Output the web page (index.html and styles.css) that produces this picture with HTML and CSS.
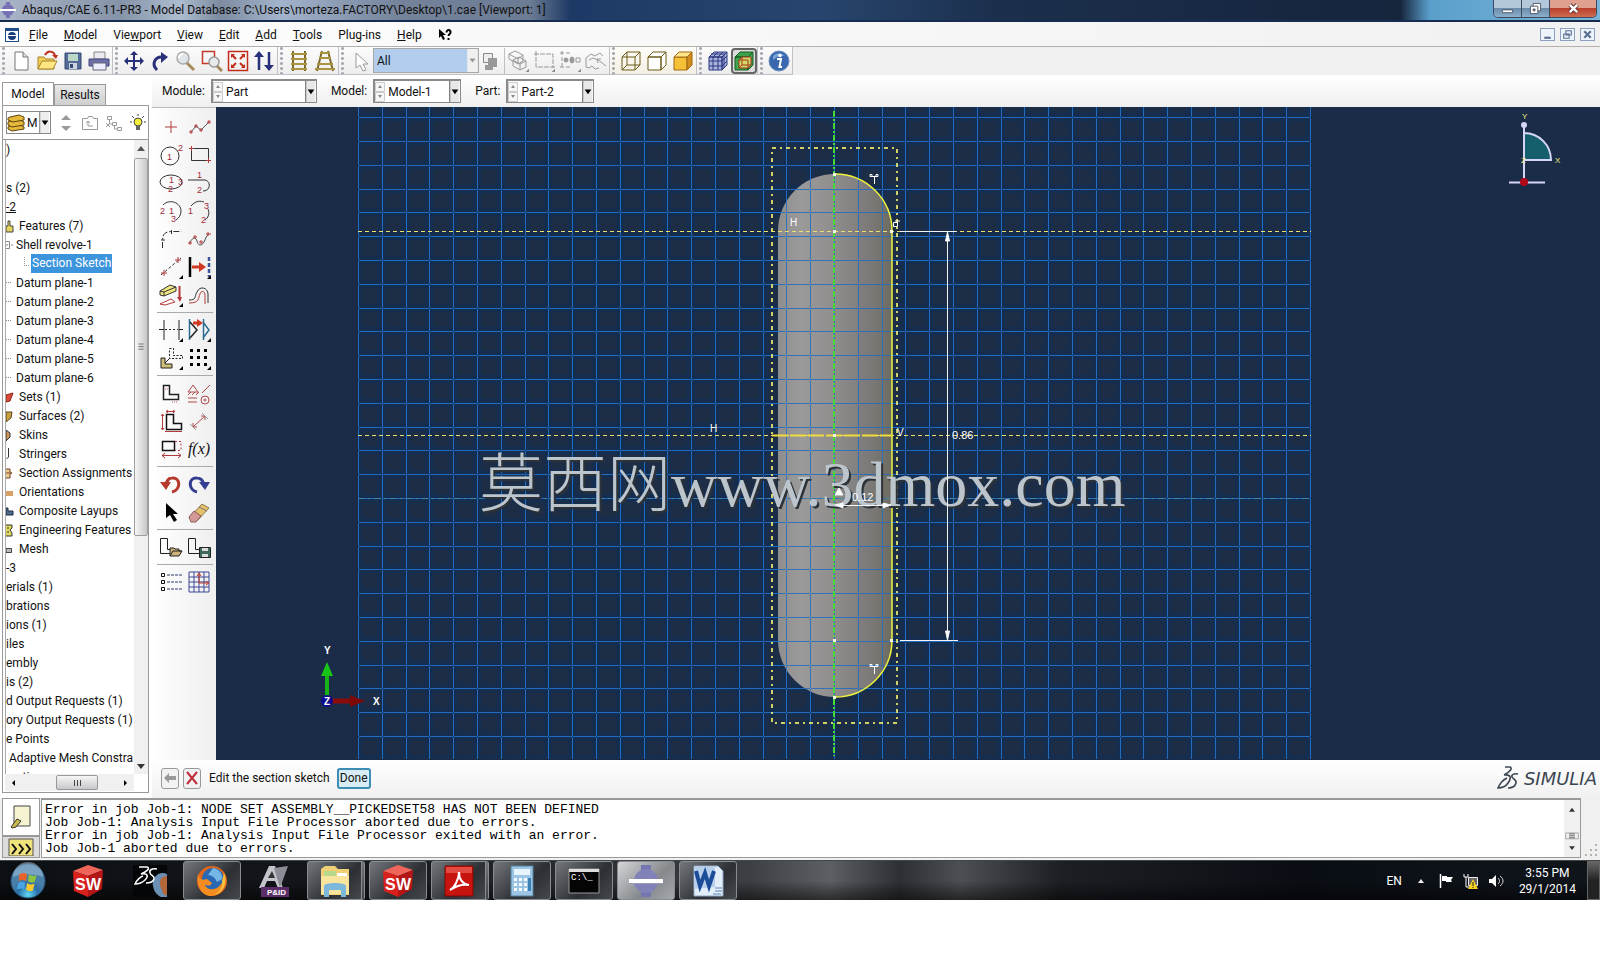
FILE: index.html
```html
<!DOCTYPE html>
<html lang="en">
<head>
    <meta charset="UTF-8">
    <meta name="viewport" content="width=device-width, initial-scale=1.0">
    <title>Abaqus/CAE 6.11-PR3</title>
    <link rel="stylesheet" href="styles.css">
</head>
<body>
    <header class="titlebar">
        <svg class="app-icon" viewBox="0 0 16 16"><circle cx="8" cy="8" r="6" fill="#7672b4"/><path d="M6 0h4v16H6z" fill="#7672b4"/><path d="M0 7h16v2H0z" fill="#fff"/></svg>
        <h1>Abaqus/CAE 6.11-PR3 - Model Database: C:\Users\morteza.FACTORY\Desktop\1.cae [Viewport: 1]</h1>
        <div class="window-buttons">
            <button aria-label="Minimize"><svg viewBox="0 0 14 14"><path d="M1.500 8.500h11v3h-11z" fill="#fff" stroke="#4c5566"/></svg></button>
            <button aria-label="Restore"><svg viewBox="0 0 14 14"><path d="M4.500 1.500h8v8h-8z" fill="#fff" stroke="#4c5566"/><path d="M1.500 4.500h8v8h-8z" fill="#fff" stroke="#4c5566"/><path d="M4.500 7.500h2v2h-2z" fill="#7890a8" stroke="#4c5566"/></svg></button>
            <button class="close" aria-label="Close"><svg viewBox="0 0 14 14"><path d="M3 3l8 8M11 3l-8 8" stroke="#5a2a2a" stroke-width="4.500"/><path d="M3 3l8 8M11 3l-8 8" stroke="#fff" stroke-width="2.600"/></svg></button>
        </div>
    </header>

    <nav class="menubar">
        <svg class="doc-icon" viewBox="0 0 14 14"><path d="M0 0h14v14H0z" fill="#1f4e86"/><path d="M1 3h12v10H1z" fill="#fff"/><ellipse cx="7" cy="8" rx="4" ry="4" fill="#1c3d78"/><path d="M2 7h10v1H2z" fill="#fff"/></svg>
        <a href="#"><u>F</u>ile</a>
        <a href="#"><u>M</u>odel</a>
        <a href="#">Vie<u>w</u>port</a>
        <a href="#"><u>V</u>iew</a>
        <a href="#"><u>E</u>dit</a>
        <a href="#"><u>A</u>dd</a>
        <a href="#"><u>T</u>ools</a>
        <a href="#">Plu<u>g</u>-ins</a>
        <a href="#"><u>H</u>elp</a>
        <button class="whats-this" aria-label="Context help"><svg viewBox="0 0 14 14"><path d="M1 1v9l2-2 2 4 2-1-2-4h3z"/><path d="M8.500 4.500c0-3.500 4.500-3 4 0c0 1.500-2 1.500-2 3.500M10.500 10v2" fill="none" stroke="#000" stroke-width="2"/></svg></button>
        <div class="mdi-buttons">
            <button aria-label="Minimize viewport"><svg viewBox="0 0 12 10"><path d="M3 8h6" stroke="#5b6f91" stroke-width="2"/></svg></button>
            <button aria-label="Restore viewport"><svg viewBox="0 0 12 10"><path d="M4.500 1.500h5v4h-5zM2.500 4.500h5v4h-5z" fill="#e8f0fb" stroke="#5b6f91"/></svg></button>
            <button aria-label="Close viewport"><svg viewBox="0 0 12 10"><path d="M3 2l6 6M9 2l-6 6" stroke="#5b6f91" stroke-width="2"/></svg></button>
        </div>
    </nav>

    <div class="toolbar">
        <div class="tool-group">
            <button aria-label="New"><svg viewBox="0 0 22 22"><path d="M5 2h8l5 5v13H5z" fill="#fff" stroke="#777"/><path d="M13 2v5h5" fill="#ddd" stroke="#777"/></svg></button>
            <button aria-label="Open"><svg viewBox="0 0 22 22"><path d="M2 19V7h6l2 2h8v10z" fill="#f3cf58" stroke="#a8842c"/><path d="M2 19l4-8h15l-4 8z" fill="#ffe680" stroke="#a8842c"/><path d="M9 5c3-5 8-4 10 0" fill="none" stroke="#c03020" stroke-width="2"/><path d="M16 5h6l-2 4z" fill="#c03020"/></svg></button>
            <button aria-label="Save"><svg viewBox="0 0 22 22"><path d="M3 3h16v16H3z" fill="#546b98" stroke="#354a70"/><path d="M6 4h10v7H6z" fill="#b9d9c6"/><path d="M7 13h8v6H7z" fill="#cdd3df"/><path d="M8 14h3v4H8z" fill="#354a70"/></svg></button>
            <button aria-label="Print"><svg viewBox="0 0 22 22"><path d="M6 2h11v7H6z" fill="#e9e9ef" stroke="#888"/><path d="M1 9h20v7H1z" fill="#6d6fa6" stroke="#45467a"/><path d="M5 13h13v7H5z" fill="#eef" stroke="#667"/></svg></button>
        </div>
        <div class="tool-group">
            <button aria-label="Pan"><svg viewBox="0 0 22 22"><path d="M11 3v16M3 11h16" stroke="#29307a" stroke-width="2"/><path d="M11 1l4 4H7zM11 21l4-4H7zM1 11l4-4v8zM21 11l-4-4v8z" fill="#29307a"/></svg></button>
            <button aria-label="Rotate"><svg viewBox="0 0 22 22"><path d="M8 20C2 14 6 6 14 7" fill="none" stroke="#29307a" stroke-width="3"/><path d="M12 2l7 5-7 6z" fill="#29307a"/></svg></button>
            <button aria-label="Magnify"><svg viewBox="0 0 22 22"><path d="M11 12l8 8" stroke="#a58a5c" stroke-width="3"/><circle cx="8" cy="8" r="6" fill="#dfe5e8" stroke="#aaa" stroke-width="1.500"/><path d="M4 8a4 4 0 014-4" fill="none" stroke="#fff" stroke-width="2"/></svg></button>
            <button aria-label="Box zoom"><svg viewBox="0 0 22 22"><path d="M1.500 1.500h12v12h-12z" fill="none" stroke="#c0392b" stroke-width="1.500"/><path d="M15 15l6 6" stroke="#a58a5c" stroke-width="3"/><circle cx="13" cy="12" r="5" fill="#e6eaec" stroke="#999" stroke-width="1.500"/></svg></button>
            <button aria-label="Auto-fit"><svg viewBox="0 0 22 22"><path d="M1.500 1.500h19v19h-19z" fill="none" stroke="#c22d1c" stroke-width="1.500"/><path d="M9 9L5 5M13 9l4-4M9 13l-4 4M13 13l4 4" stroke="#c22d1c" stroke-width="2"/><path d="M4 4h4L4 8zM18 4v4l-4-4zM4 18v-4l4 4zM18 18h-4l4-4z" fill="#c22d1c"/></svg></button>
            <button aria-label="Cycle views"><svg viewBox="0 0 22 22"><path d="M6 20V5M16 2v15" stroke="#29307a" stroke-width="2.500"/><path d="M6 1l5 6H1zM16 21l5-6H11z" fill="#29307a"/></svg></button>
        </div>
        <div class="tool-group">
            <button aria-label="Parallel projection"><svg viewBox="0 0 22 22"><path d="M5 1v20M17 1v20" stroke="#7c6a2c" stroke-width="2"/><path d="M3 4h16M3 9h16M3 14h16M3 19h16" stroke="#ab9440" stroke-width="2"/></svg></button>
            <button aria-label="Perspective"><svg viewBox="0 0 22 22"><path d="M8 1L3 21M14 1l5 20" stroke="#7c6a2c" stroke-width="2"/><path d="M6 3h10M5 8h12M3 14h16M1 19h20" stroke="#ab9440" stroke-width="2"/></svg></button>
        </div>
        <div class="tool-group">
            <button aria-label="Select"><svg viewBox="0 0 22 22"><path d="M7 3v15l4-3 3 6 3-1-3-6h5z" fill="#fff" stroke="#999"/></svg></button>
            <div class="combo combo-filter">
                <select aria-label="Selection filter"><option>All</option></select>
                <svg class="arrow" viewBox="0 0 10 22"><path d="M0 0h10v22H0z" fill="#f0f0f0"/><path d="M2 9h6l-3 4z" fill="#999"/></svg>
            </div>
            <button class="divided" aria-label="Replace selection"><svg viewBox="0 0 22 22"><path d="M2.500 3.500h9v9h-9z" fill="#eee" stroke="#888"/><path d="M7 8h9v9H7zM4 15h8v5H4z" fill="#999"/></svg></button>
            <button aria-label="Select from exterior"><svg viewBox="0 0 22 22" fill="none" stroke="#999"><path d="M2 4l6-3 8 4v6l-5 3-9-5zM2 4l9 5v5M11 9l5-4M6 10l6-3 7 4v6l-6 3-7-4zM6 10l7 4v6M13 14l6-3"/><path d="M22 19v3h-3z" fill="#777"/></svg></button>
            <button aria-label="Drag shape"><svg viewBox="0 0 22 22" fill="none" stroke="#999"><path d="M1 4h19v14M3 1v16h19" stroke-dasharray="5 1"/><path d="M22 19v3h-3z" fill="#777"/></svg></button>
            <button aria-label="Inside drag shape"><svg viewBox="0 0 22 22" fill="none" stroke="#999"><path d="M1 3h12M3 1v17M1 17h12" stroke-dasharray="4 2"/><circle cx="7" cy="10" r="2" fill="#999"/><ellipse cx="13" cy="10" rx="2" ry="3" fill="#999"/><path d="M17 8h4v4h-4z"/><path d="M22 19v3h-3z" fill="#777"/></svg></button>
            <button aria-label="Angle"><svg viewBox="0 0 22 22" fill="none" stroke="#999"><path d="M1 8l5-4 4 2 5-3 3 3M1 8v9l3 1 3-2 3 3 4-1M4 10l4-2 5 2M12 9l9 7M12 9l1 4M12 9h4"/></svg></button>
        </div>
        <div class="tool-group warm">
            <button aria-label="Wireframe"><svg viewBox="0 0 22 22" fill="none" stroke="#6b5a18"><path d="M2 7h13v13H2zM7 2h13v13H7zM2 7l5-5M15 7l5-5M15 20l5-5M2 20l5-5"/></svg></button>
            <button aria-label="Hidden line"><svg viewBox="0 0 22 22" fill="#fff" stroke="#6b5a18"><path d="M2 7h13v13H2zM2 7l5-5h13l-5 5zM15 20l5-5V2l-5 5z"/></svg></button>
            <button aria-label="Shaded"><svg viewBox="0 0 22 22" stroke="#a06a10"><path d="M2 7h13v13H2z" fill="#f6c136"/><path d="M2 7l5-5h13l-5 5z" fill="#ffe68a"/><path d="M15 20l5-5V2l-5 5z" fill="#d08c1c"/></svg></button>
        </div>
        <div class="tool-group">
            <button aria-label="Show mesh"><svg viewBox="0 0 22 22" stroke="#2c3780"><path d="M2 7h13v13H2zM2 7l5-5h13l-5 5zM15 20l5-5V2l-5 5z" fill="#a9b3dc"/><path d="M6 7v13M11 7v13M2 11h13l5-5M2 16h13l5-5M6 7l5-5M11 7l5-5M17 5v13M4 4h14" fill="none"/></svg></button>
            <button class="active" aria-label="Show native mesh"><svg viewBox="0 0 22 22" stroke="#175c22"><path d="M2 7h13v13H2zM2 7l5-5h13l-5 5zM15 20l5-5V2l-5 5z" fill="#3fa34d"/><path d="M6 10h9v8H6zM6 10l3-3h9v8l-3 3" fill="#d4d866" stroke="#a03820"/><path d="M9 7v8h9M6 18l3-3" fill="none" stroke="#a03820"/></svg></button>
        </div>
        <div class="tool-group">
            <button aria-label="Query information"><svg viewBox="0 0 22 22"><circle cx="11" cy="11" r="10" fill="#3a68ae" stroke="#6c8cc0"/><path d="M5 6a8 8 0 0112 0c-4-1-8 0-12 4z" fill="#7da2d8"/><circle cx="12" cy="5.500" r="1.800" fill="#fff"/><path d="M9 9h4l-1.500 8H14" fill="none" stroke="#fff" stroke-width="2"/></svg></button>
        </div>
    </div>

    <main class="workspace">
        <aside class="model-panel">
            <div class="tabs">
                <button class="tab selected">Model</button>
                <button class="tab">Results</button>
            </div>
            <div class="tree-pane">
                <div class="tree-tools">
                    <div class="combo combo-db">
                        <svg class="db" viewBox="0 0 18 18" fill="#e6b93c" stroke="#5c4308"><path d="M3 12l10-1 4 2v2l-12 2-4-2v-2z"/><path d="M3 7l10-1 4 2v3l-12 2-4-2V8z"/><path d="M3 3l9-2 5 2v3L6 8 1 6V4z"/></svg>
                        <select aria-label="Model database"><option>M</option></select>
                        <svg class="arrow" viewBox="0 0 10 22"><path d="M0 0h10v22H0z" fill="#eee"/><path d="M0 0v22" stroke="#777"/><path d="M2 9h7l-3.500 5z"/></svg>
                    </div>
                    <button aria-label="Step up or down"><svg viewBox="0 0 18 18" fill="#999"><path d="M9 1l5 5H4zM9 17l5-5H4z"/></svg></button>
                    <button aria-label="Up one level"><svg viewBox="0 0 18 18" fill="none" stroke="#999"><path d="M1.500 4.500h5l1-2h4l1 2h4v11h-15zM12 12H7V7M5 9l2-2 2 2"/></svg></button>
                    <button aria-label="Expand"><svg viewBox="0 0 18 18" fill="none" stroke="#999"><path d="M2.500 2.500h4v3h-4zM7.500 8.500h4v3h-4zM12.500 13.500h4v3h-4zM4.500 6v4h3M9.500 12v3h3M1 9l4 4M1 13l4-4"/></svg></button>
                    <button aria-label="Tips"><svg viewBox="0 0 18 18"><circle cx="9" cy="8" r="4" fill="#f4ee3c" stroke="#444"/><path d="M7 12h4v4H7z" fill="#666"/><path d="M9 0v2M1 8h2M15 8h2M3 2l2 2M15 2l-2 2" stroke="#444"/></svg></button>
                </div>
                <div class="tree-view">
                    <ul class="tree">
                        <li>)</li>
                        <li></li>
                        <li>s (2)</li>
                        <li class="current">-2</li>
                        <li class="feature"><svg viewBox="0 0 8 14"><path d="M0 7h2V2h2v5h3v6H0z" fill="#e2d45c" stroke="#444"/></svg>Features (7)</li>
                        <li class="branch"><svg viewBox="0 0 8 14"><path d="M0 3.500h3.500v7H0M0 7h2M5 7h2" fill="none" stroke="#888"/></svg>Shell revolve-1</li>
                        <li class="leaf"><svg viewBox="0 0 8 14"><path d="M1.500 0v8M1 8.500h6" stroke="#999" stroke-dasharray="1 1"/></svg><mark>Section Sketch</mark></li>
                        <li class="branch datum">Datum plane-1</li>
                        <li class="branch datum">Datum plane-2</li>
                        <li class="branch datum">Datum plane-3</li>
                        <li class="branch datum">Datum plane-4</li>
                        <li class="branch datum">Datum plane-5</li>
                        <li class="branch datum">Datum plane-6</li>
                        <li class="feature"><svg viewBox="0 0 8 14"><path d="M0 5l7-2-3 8-4 1z" fill="#d84a3a" stroke="#8c2418"/></svg>Sets (1)</li>
                        <li class="feature"><svg viewBox="0 0 8 14"><path d="M0 3h6l-1 6-5 4z" fill="#c9a044" stroke="#5d4716"/></svg>Surfaces (2)</li>
                        <li class="feature"><svg viewBox="0 0 8 14"><path d="M0 2l4 3v4l-4 4z" fill="#d4934e" stroke="#26304e"/></svg>Skins</li>
                        <li class="feature"><svg viewBox="0 0 8 14"><path d="M2.500 1v9l-2 2" fill="none" stroke="#333"/></svg>Stringers</li>
                        <li class="feature"><svg viewBox="0 0 8 14"><path d="M0 3h4v3l2 1-2 1v4H0M0 7h4" fill="#e4cf90" stroke="#7c3d24"/></svg>Section Assignments</li>
                        <li class="feature"><svg viewBox="0 0 8 14"><path d="M0 6h7v5H0z" fill="#d8a266"/></svg>Orientations</li>
                        <li class="feature"><svg viewBox="0 0 8 14"><path d="M0 4h2v3h5v4H0z" fill="#4c6c8c" stroke="#1c2c44"/></svg>Composite Layups</li>
                        <li class="feature"><svg viewBox="0 0 8 14"><path d="M0 2h6v3L4 7l2 3v3H0M1 5h2M1 9h2" fill="#e2da5c" stroke="#333"/></svg>Engineering Features</li>
                        <li class="feature"><svg viewBox="0 0 8 14"><path d="M0 6.500h5.500v4H0z" fill="#bbb" stroke="#444"/></svg>Mesh</li>
                        <li>-3</li>
                        <li>erials (1)</li>
                        <li>brations</li>
                        <li>ions (1)</li>
                        <li>iles</li>
                        <li>embly</li>
                        <li>is (2)</li>
                        <li>d Output Requests (1)</li>
                        <li>ory Output Requests (1)</li>
                        <li>e Points</li>
                        <li>&nbsp;Adaptive Mesh Constra</li>
                        <li>rections</li>
                    </ul>
                    <div class="vscroll">
                        <svg viewBox="0 0 14 18"><path d="M3 11l4-5 4 5z" fill="#555"/></svg>
                        <div class="vthumb"><svg viewBox="0 0 14 14"><path d="M4 3.500h6M4 6.500h6M4 9.500h6" stroke="#666"/></svg></div>
                        <svg class="down" viewBox="0 0 14 18"><path d="M3 8l4 5 4-5z" fill="#333"/></svg>
                    </div>
                </div>
                <div class="hscroll">
                    <svg viewBox="0 0 16 14"><path d="M10 4L7 7l3 3z"/></svg>
                    <div class="hthumb"><svg viewBox="0 0 14 14"><path d="M4.500 4v6M7.500 4v6M10.500 4v6" stroke="#444"/></svg></div>
                    <svg viewBox="0 0 16 14"><path d="M6 4l3 3-3 3z"/></svg>
                </div>
            </div>
        </aside>

        <div class="stage">
            <div class="context-bar">
                <label for="module">Module:</label>
                <div class="combo combo-module">
                    <svg class="spin" viewBox="0 0 10 20"><path d="M.5.5h9v9h-9zM.5 10.500h9v9h-9z" fill="#f6f6f6" stroke="#ccc"/><path d="M5 3l2 3H3zM5 16l2-3H3z" fill="#888"/></svg>
                    <select id="module"><option>Part</option></select>
                    <svg class="arrow" viewBox="0 0 10 22"><path d="M0 0h10v22H0z" fill="#e8e8e8"/><path d="M0 0v22" stroke="#555"/><path d="M2 9h7l-3.500 5z"/></svg>
                </div>
                <label for="model">Model:</label>
                <div class="combo">
                    <svg class="spin" viewBox="0 0 10 20"><path d="M.5.5h9v9h-9zM.5 10.500h9v9h-9z" fill="#f6f6f6" stroke="#ccc"/><path d="M5 3l2 3H3zM5 16l2-3H3z" fill="#888"/></svg>
                    <select id="model"><option>Model-1</option></select>
                    <svg class="arrow" viewBox="0 0 10 22"><path d="M0 0h10v22H0z" fill="#e8e8e8"/><path d="M0 0v22" stroke="#555"/><path d="M2 9h7l-3.500 5z"/></svg>
                </div>
                <label for="part">Part:</label>
                <div class="combo">
                    <svg class="spin" viewBox="0 0 10 20"><path d="M.5.5h9v9h-9zM.5 10.500h9v9h-9z" fill="#f6f6f6" stroke="#ccc"/><path d="M5 3l2 3H3zM5 16l2-3H3z" fill="#888"/></svg>
                    <select id="part"><option>Part-2</option></select>
                    <svg class="arrow" viewBox="0 0 10 22"><path d="M0 0h10v22H0z" fill="#e8e8e8"/><path d="M0 0v22" stroke="#555"/><path d="M2 9h7l-3.500 5z"/></svg>
                </div>
            </div>

            <div class="drawing-area">
                <div class="toolbox">
                    <div class="tool-block">
                        <button aria-label="Isolated point"><svg viewBox="0 0 24 24"><path d="M12 6v12M6 12h12" stroke="#b33a3a"/></svg></button>
                        <button aria-label="Connected lines"><svg viewBox="0 0 24 24" fill="none"><path d="M4 17l5-6 5 4 8-8" stroke="#555"/><path d="M2 17h4M4 15v4M7 11h4M9 9v4M12 15h4M14 13v4M20 7h4M22 5v4" stroke="#b33a3a"/></svg></button>
                        <button aria-label="Circle"><svg viewBox="0 0 24 24" fill="none"><circle cx="11" cy="13" r="9" stroke="#333"/><text x="8" y="17" class="num">1</text><text x="19" y="8" class="num">2</text></svg></button>
                        <button aria-label="Rectangle"><svg viewBox="0 0 24 24" fill="none"><path d="M4.500 5.500h17v12h-17z" stroke="#333"/><path d="M2 5.500h5M4.500 3v5M19 17.500h5M21.500 15v5" stroke="#b33a3a"/></svg></button>
                        <button aria-label="Ellipse"><svg viewBox="0 0 24 24" fill="none"><ellipse cx="12" cy="11" rx="11" ry="7" stroke="#333"/><text x="10" y="12" class="num">1</text><text x="9" y="21" class="num">2</text><text x="19" y="14" class="num">3</text></svg></button>
                        <button aria-label="Tangent arc"><svg viewBox="0 0 24 24" fill="none"><path d="M1 9h17c6 1 6 11-2 11" stroke="#333"/><text x="10" y="7" class="num">1</text><text x="10" y="22" class="num">2</text></svg></button>
                        <button aria-label="Center arc"><svg viewBox="0 0 24 24" fill="none"><path d="M4 6c7-7 18-2 18 6c0 4-2 7-5 9" stroke="#333"/><text x="1" y="15" class="num">2</text><text x="10" y="15" class="num">1</text><text x="12" y="23" class="num">3</text></svg></button>
                        <button aria-label="Three point arc"><svg viewBox="0 0 24 24" fill="none"><path d="M4 7c5-6 10-5 13-4M21 10c2 5 0 9-3 11" stroke="#333"/><text x="1" y="15" class="num">1</text><text x="17" y="10" class="num">3</text><text x="14" y="24" class="num">2</text></svg></button>
                        <button aria-label="Fillet"><svg viewBox="0 0 24 24" fill="none" stroke="#333"><path d="M3.500 21v-7c0-7 2-9 9-9.500h10" stroke-dasharray="6 2 2 2"/><path d="M2 13h4M12.500 3v4"/></svg></button>
                        <button aria-label="Spline"><svg viewBox="0 0 24 24" fill="none"><path d="M3 16c2-6 6-6 7-2s4 6 7 1c2-4 2-6 5-8" stroke="#444"/><path d="M1 16h4M3 14v4M6 10h4M8 8v4M12 15h4M14 13v4M19 7h5M21 5v4" stroke="#b33a3a"/></svg></button>
                        <button aria-label="Construction line"><svg viewBox="0 0 24 24" fill="none"><path d="M2 20L22 3" stroke="#333" stroke-dasharray="3 2"/><path d="M2 18h6M5 15v6M16 5h6M19 2v6" stroke="#b33a3a"/><path d="M24 20v4h-4z" fill="#000"/></svg></button>
                        <button aria-label="Project edges"><svg viewBox="0 0 24 24"><path d="M3 2v20" stroke="#000" stroke-width="2.500"/><path d="M5 12h9" stroke="#d03a24" stroke-width="3"/><path d="M12 7l7 5-7 5z" fill="#d03a24"/><path d="M22 2v20" stroke="#3a54a0" stroke-width="2.500" stroke-dasharray="4 2"/><path d="M24 20v4h-4z" fill="#000"/></svg></button>
                        <button aria-label="Section"><svg viewBox="0 0 24 24" stroke="#333"><path d="M1 8l10-6 6 2v4L5 13l-4-1z" fill="#f1e582"/><path d="M1 8l4 1 12-5M5 9v4" fill="none"/><path d="M1 21l11-5 4 3-10 3z" fill="#fff" stroke="#b33a3a"/><path d="M20.500 3v13" stroke="#b33a3a" stroke-width="2"/><path d="M18 14h5l-2 5z" fill="#b33a3a" stroke="none"/><path d="M24 20v4h-4z" fill="#000" stroke="none"/></svg></button>
                        <button aria-label="Offset curves"><svg viewBox="0 0 24 24" fill="none"><path d="M2 17c8 0 5-3 8-8 3-7 11-4 11 2v9" stroke="#333"/><path d="M2 20c11 0 9-5 11-9 1-4 5-3 5 1v9" stroke="#b33a3a"/></svg></button>
                    </div>
                    <hr>
                    <div class="tool-block">
                        <button aria-label="Auto-trim"><svg viewBox="0 0 24 24" fill="none" stroke="#222"><path d="M5 2v20M20 2v20M0 11.500h5M20 11.500h4"/><path d="M6 11.500h13" stroke-dasharray="2 2"/><path d="M24 20v4h-4z" fill="#000" stroke="none"/></svg></button>
                        <button aria-label="Mirror"><svg viewBox="0 0 24 24" fill="none" stroke="#2b6c94" stroke-width="1.500"><path d="M2.500 1v21M16.500 1v21M16 4l6 8-6 8"/><path d="M3 4l7 8-7 8" stroke="#222"/><path d="M6 5h5" stroke="#d03a24" stroke-width="3"/><path d="M10 1l6 4-6 4z" fill="#d03a24" stroke="none"/><path d="M24 20v4h-4z" fill="#000" stroke="none"/></svg></button>
                        <button aria-label="Copy"><svg viewBox="0 0 24 24" fill="none" stroke="#222"><path d="M2 12h4v6h7v4H2z" fill="#cfc07a"/><path d="M10.500 2.500h4v7h9v3h-13z" stroke-dasharray="2 1.500"/><path d="M6 17l5-5"/><path d="M24 20v4h-4z" fill="#000" stroke="none"/></svg></button>
                        <button aria-label="Linear pattern"><svg viewBox="0 0 24 24"><path d="M3 3h3v3H3zM10 3h3v3h-3zM17 3h3v3h-3zM3 10h3v3H3zM10 10h3v3h-3zM17 10h3v3h-3zM3 17h3v3H3zM10 17h3v3h-3zM17 17h3v3h-3z"/><path d="M24 20v4h-4z"/></svg></button>
                    </div>
                    <hr>
                    <div class="tool-block">
                        <button aria-label="Auto-constrain"><svg viewBox="0 0 24 24" fill="none" stroke="#222"><path d="M4.500 4.500h6v9h9v5h-15z" stroke-width="1.500"/><path d="M6 8h3M13 21h5" stroke="#c06060" stroke-dasharray="1 1"/></svg></button>
                        <button aria-label="Add constraint"><svg viewBox="0 0 24 24" fill="none" stroke="#b04a4a"><path d="M1 11l5-7 5 7zM1 14l3-3M5 14l3-3M9 14l3-3M15 12l8-8M1 17h9M1 21h9"/><circle cx="18" cy="19" r="4"/><circle cx="18" cy="19" r="1"/></svg></button>
                        <button aria-label="Auto-dimension"><svg viewBox="0 0 24 24" fill="none"><path d="M7.500 5.500h7v9h8v6h-15z" stroke="#111" stroke-width="1.500"/><path d="M3.500 6v14M2 7l1.500-2L5 7M2 19l1.500 2L5 19M8 2.500h7M6 22.500h17M9 1l-2 1.500L9 4M14 1l2 1.500L14 4" stroke="#b33a3a"/></svg></button>
                        <button aria-label="Add dimension"><svg viewBox="0 0 24 24" fill="none" stroke="#b04a4a"><path d="M6 18L18 7M6 14v4h4M14 7h4v4" /><path d="M3 15l6 6M15 4l6 6" stroke="#999"/></svg></button>
                        <button aria-label="Edit dimension"><svg viewBox="0 0 24 24" fill="none"><path d="M3.500 4.500h12v9h-12z" stroke="#111" stroke-width="1.500"/><path d="M16 4.500h6v9h-6" stroke="#b33a3a" stroke-dasharray="2 2"/><path d="M3 18.500h19M6 16l-3 2.500L6 21M19 16l3 2.500-3 2.500" stroke="#b33a3a"/></svg></button>
                        <button class="fx">f(x)</button>
                    </div>
                    <hr>
                    <div class="tool-block">
                        <button aria-label="Undo"><svg viewBox="0 0 24 24"><path d="M13 20c9-2 9-15 0-14-4 0-5 3-6 6" fill="none" stroke="#b5392c" stroke-width="3"/><path d="M1 10h11l-5 8z" fill="#b5392c"/></svg></button>
                        <button aria-label="Redo"><svg viewBox="0 0 24 24"><path d="M10 20C1 18 1 5 10 6c4 0 6 3 7 6" fill="none" stroke="#343e90" stroke-width="3"/><path d="M12 10h11l-5 8z" fill="#343e90"/></svg></button>
                        <button aria-label="Pick"><svg viewBox="0 0 24 24"><path d="M7 3v15l4-3 4 7 3-2-4-6h5z"/></svg></button>
                        <button aria-label="Delete"><svg viewBox="0 0 24 24"><path d="M3 17L15 4l7 4L10 21z" fill="#e4c06c" stroke="#8c7a4c"/><path d="M2 17l5-6 7 5-5 6H4z" fill="#d49a9a" stroke="#8c5a5a"/><path d="M12 7l8 4" stroke="#777"/></svg></button>
                    </div>
                    <hr>
                    <div class="tool-block">
                        <button aria-label="Add sketch"><svg viewBox="0 0 24 24" fill="none" stroke="#222"><path d="M1.500 3.500h7v11h4v4h-11z"/><path d="M11 21v-8h4l1 1h4v2h3l-3 5z" fill="#cbb27a"/><path d="M11 21l3-5h9" /></svg></button>
                        <button aria-label="Save sketch"><svg viewBox="0 0 24 24" fill="none" stroke="#222"><path d="M1.500 3.500h7v11h4v4h-11z"/><path d="M12.500 12.500h11v10h-11z" fill="#3f6a5c"/><path d="M15 13h6v3h-6zM15 19h6v3h-6z" fill="#ddd" stroke="none"/></svg></button>
                    </div>
                    <hr>
                    <div class="tool-block">
                        <button aria-label="Sketcher options"><svg viewBox="0 0 24 24" fill="none"><path d="M2.500 3.500h3v3h-3zM2.500 10.500h3v3h-3zM2.500 17.500h3v3h-3z" stroke="#111"/><path d="M8 5h15M8 12h15M8 19h15" stroke="#2e3a6c" stroke-dasharray="3 1"/></svg></button>
                        <button aria-label="Reset view"><svg viewBox="0 0 24 24" fill="none"><path d="M2 2h20v20H2zM7 2v20M12 2v20M17 2v20M2 7h20M2 12h20M2 17h20" stroke="#3c4696"/><path d="M12 13V4M12 13h9M10 6l2-3 2 3M19 11l3 2-3 2" stroke="#c0392b"/></svg></button>
                    </div>
                </div>

                <svg class="viewport" viewBox="0 0 1384 653" role="img" aria-label="Section sketch">
                    <defs>
                        <!-- five grid cells per tile -->
                        <pattern id="grid" x="142" y="-85" width="119" height="119" patternUnits="userSpaceOnUse">
                            <rect width="119" height="119" fill="#1c2d45"/>
                            <path class="grid-glow" d="M0 0v119M24 0v119M48 0v119M71 0v119M95 0v119M119 0v119M0 0h119M0 24h119M0 48h119M0 71h119M0 95h119M0 119h119"/>
                            <path class="grid-line" d="M0 0h1v119H0zM24 0h1v119h-1zM48 0h1v119h-1zM71 0h1v119h-1zM95 0h1v119h-1zM0 0v1h119V0zM0 24v1h119v-1zM0 48v1h119v-1zM0 71v1h119v-1zM0 95v1h119v-1z"/>
                        </pattern>
                        <pattern id="gridTop" x="142" y="-85" width="119" height="119" patternUnits="userSpaceOnUse">
                            <path class="grid-line" d="M0 0h1v119H0zM24 0h1v119h-1zM48 0h1v119h-1zM71 0h1v119h-1zM95 0h1v119h-1zM0 0v1h119V0zM0 24v1h119v-1zM0 48v1h119v-1zM0 71v1h119v-1zM0 95v1h119v-1z"/>
                        </pattern>
                        <linearGradient id="shell">
                            <stop offset="0" stop-color="#8e8e8f"/>
                            <stop offset=".2" stop-color="#9b9a9a"/>
                            <stop offset=".5" stop-color="#8f8d8c"/>
                            <stop offset=".8" stop-color="#7c7a79"/>
                            <stop offset="1" stop-color="#6c6b60"/>
                        </linearGradient>
                    </defs>
                    <rect width="1384" height="653" fill="#1b2c48"/>
                    <rect x="142" width="953" height="652" fill="url(#grid)"/>

                    <path d="M562 124a57 57 0 01114 0v409a57 57 0 01-114 0z" fill="url(#shell)"/>
                    <path d="M562 124a57 57 0 01114 0v409a57 57 0 01-114 0z" fill="url(#gridTop)" opacity=".85"/>
                    <path d="M618 67a57 57 0 0158 57v409a57 57 0 01-58 57" fill="none" stroke="#eef23c" stroke-width="1.500"/>

                    <path class="ref-line" d="M142 124.500h953M142 328.500h953"/>
                    <path class="origin-line" d="M142 391.500h953"/>
                    <path class="ref-box" d="M556 41h125v575h-125z"/>
                    <path d="M556 328.500h120" stroke="#f0dc3c" stroke-width="2" stroke-dasharray="16 2"/>
                    <path class="axis" d="M618 4v645"/>

                    <g fill="#f4f6e0"><path d="M617 66h3v3h-3zM617 123h3v3h-3zM674 123h3v3h-3zM617 532h3v3h-3zM674 532h3v3h-3zM617 589h3v3h-3zM617 327h3v3h-3z"/></g>

                    <g class="marks">
                        <text x="574" y="119">H</text>
                        <text x="494" y="325">H</text>
                        <text x="681" y="329">V</text>
                        <path d="M654 69.500h8M658.500 69v8M654 67.500h2v2h-2zM660 67.500h2v2h-2zM654 559.500h8M658.500 559v8M654 557.500h2v2h-2zM660 557.500h2v2h-2zM677.500 115.500h4v4h-4zM679 114h5"/>
                    </g>

                    <!-- axis triad -->
                    <path d="M111 592v-24" stroke="#16b416" stroke-width="4"/>
                    <path d="M111 555l6 14h-12z" fill="#18c418"/>
                    <path d="M116 594h20" stroke="#8c0c0c" stroke-width="5"/>
                    <path d="M134 588l15 6-15 6z" fill="#7c0808"/>
                    <circle cx="111" cy="594" r="6" fill="#0a0a90"/>
                    <g class="triad">
                        <text x="108" y="547">Y</text>
                        <text x="108" y="598">Z</text>
                        <text x="157" y="598">X</text>
                    </g>

                    <!-- view compass -->
                    <path d="M1308 53V26a27 27 0 0127 27z" fill="#155f6c" stroke="#d5d5f5" stroke-width="2"/>
                    <path d="M1308 18v57M1293 75.500h36" stroke="#d5d5f5" stroke-width="2"/>
                    <circle cx="1308" cy="18" r="3" fill="#d5d5f5"/>
                    <circle cx="1308" cy="75" r="4" fill="#b00818"/>
                    <g class="compass">
                        <text x="1306" y="12">Y</text>
                        <text x="1305" y="56">Z</text>
                        <text x="1339" y="56">X</text>
                    </g>

                    <text class="watermark" x="263" y="399">莫西网www.3dmox.com</text>

                    <g class="dims">
                        <path d="M684 124.500h56M684 533.500h58M731.500 125v408M619 398.500h56"/>
                        <path class="head" d="M731.500 125l2 9h-4zM731.500 533l2-9h-4zM619 398l8-2v5zM675 398l-8-2v5zM619 388l4-7 4 7z"/>
                        <text x="736" y="332">0.86</text>
                        <text x="636" y="394">0.12</text>
                    </g>
                </svg>
            </div>

            <div class="prompt-area">
                <button class="square" aria-label="Back" disabled><svg viewBox="0 0 16 18"><path d="M2 9l5-5v3h7v4H7v3z" fill="#999"/></svg></button>
                <button class="square" aria-label="Cancel"><svg viewBox="0 0 16 18"><path d="M3 3l10 12M13 3L3 15" stroke="#c02a3c" stroke-width="2"/></svg></button>
                <span>Edit the section sketch</span>
                <button class="done">Done</button>
                <div class="brand">
                    <svg viewBox="0 0 22 24" fill="none" stroke="#3c4650" stroke-width="1.600"><path d="M8 1h5c3 1 0 5-6 8M7 9c8-1 7 4 4 8-2 3-6 5-10 5 2-5 5-8 9-10"/><path d="M21 8c-4-1-7 1-6 3s5 3 4 6c-1 4-4 5-8 5"/></svg>
                    <span>SIMULIA</span>
                </div>
            </div>
        </div>
    </main>

    <section class="message-area">
        <div class="message-tabs">
            <button class="selected" aria-label="Messages"><svg viewBox="0 0 22 26"><path d="M4 2h16v20H4z" fill="#f5f3d0" stroke="#444"/><path d="M1 23l6-8 4 2-5 6-4 1z" fill="#c8b84a" stroke="#333"/></svg></button>
            <button aria-label="Command line"><svg viewBox="0 0 26 18"><path d="M1 1h24v17H1z" fill="#f0e27c" stroke="#555"/><path d="M4 6l4 5-4 5M11 6l4 5-4 5M18 6l4 5-4 5" fill="none" stroke="#111" stroke-width="2"/></svg></button>
        </div>
        <div class="log">
            <pre>Error in job Job-1: NODE SET ASSEMBLY__PICKEDSET58 HAS NOT BEEN DEFINED
Job Job-1: Analysis Input File Processor aborted due to errors.
Error in job Job-1: Analysis Input File Processor exited with an error.
Job Job-1 aborted due to errors.</pre>
            <svg class="log-scroll" viewBox="0 0 16 58"><path d="M0 0h16v58H0z" fill="#f0f0f0"/><path d="M5 12l3-4 3 4z" fill="#333"/><path d="M1.500 33.500h13v6h-13z" fill="#eee" stroke="#aaa"/><path d="M5 34.500h6M5 36.500h6M5 38.500h6" stroke="#666"/><path d="M5 47l3 4 3-4z" fill="#333"/></svg>
        </div>
        <svg class="grip" viewBox="0 0 14 14"><path d="M10 0h2v2h-2zM5 5h2v2H5zM10 5h2v2h-2zM0 10h2v2H0zM5 10h2v2H5zM10 10h2v2h-2z" fill="#b5b0a8"/></svg>
    </section>

    <footer class="taskbar">
        <button class="start" aria-label="Start"><svg viewBox="0 0 40 40"><defs><radialGradient id="orb" cy=".9"><stop offset="0" stop-color="#5fd8f4"/><stop offset=".6" stop-color="#2a6fa8"/><stop offset="1" stop-color="#4a7fa8"/></radialGradient></defs><circle cx="20" cy="20" r="18" fill="url(#orb)" stroke="#26486a"/><path d="M4 16a16 16 0 0132 0c-10-4-22-4-32 0z" fill="#a9c8de" opacity=".5"/><path d="M11 13c3-2 6-2 8 0l-1 7c-3-2-5-1-8 0z" fill="#e8622c"/><path d="M21 13c3 2 5 2 8 1l-2 7c-2 1-5 1-7-1z" fill="#8cc63e"/><path d="M10 22c3-2 5-1 7 0l-1 7c-3-2-5-1-8 0z" fill="#4aa4e4"/><path d="M19 22c3 2 5 2 8 1l-2 7c-2 1-5 1-7-1z" fill="#fcc82c"/></svg></button>
        <button aria-label="SolidWorks"><svg viewBox="0 0 34 34"><path d="M2 7L17 1l15 5-15 6z" fill="#f0655a"/><path d="M2 7l15 5v21L3 27z" fill="#d8201c"/><path d="M32 6l-15 6v21l14-8z" fill="#b41616"/><text x="4" y="26" class="logo-s">S</text><text x="15" y="26" class="logo-s">W</text></svg></button>
        <button aria-label="CATIA"><svg viewBox="0 0 34 34"><path d="M0 1h34v32H0z" fill="#050608"/><path d="M34 10c-8-4-16 4-14 12 1 6 4 9 8 11h6z" fill="#6c8fb4"/><path d="M34 12c-8 0-8 7-6 12l3 7h3z" fill="#b5673c"/><path d="M6 3h8c4 1-1 5-6 7 8-1 7 3 4 6s-6 4-10 4c2-4 5-7 8-8M24 5c-5-1-8 1-7 4s5 3 4 6-5 4-8 4" fill="none" stroke="#fff" stroke-width="1.500"/></svg></button>
        <button class="open" aria-label="Firefox"><svg viewBox="0 0 34 34"><circle cx="17" cy="17" r="15" fill="#e0661c"/><circle cx="18" cy="15" r="11" fill="#2a68b4"/><path d="M18 4c6 1 10 6 9 11l-5 3c-2-5-6-7-9-7z" fill="#74b7e4"/><path d="M3 9c1 6 3 8 9 6l5 4c-2 4-6 3-7 1 0 6 12 9 18-3 2 8-4 15-12 15S1 24 3 9z" fill="#f58c22"/><path d="M29 9c4 9 0 20-10 22 6-4 9-8 8-14z" fill="#f9c13c"/></svg></button>
        <button aria-label="AutoCAD P&amp;ID"><svg viewBox="0 0 34 34"><path d="M2 24L12 2h6l8 22h-5l-3-7h-8l-3 7z" fill="#c4c4cc"/><path d="M11 14l4-7 3 7z" fill="#333"/><path d="M17 4l14-2-8 22z" fill="#8c8c96"/><path d="M4 23h28v10H4z" fill="#5c2e68"/><text x="10" y="31" class="pid">P&amp;ID</text></svg></button>
        <button class="open stack" aria-label="Windows Explorer"><svg viewBox="0 0 34 34"><path d="M3 5l4-3h10l3 3h11v26H3z" fill="#f0d074"/><path d="M6 7h12v8H6z" fill="#b8d88c"/><path d="M19 9h10v6H19z" fill="#fff"/><path d="M3 12h28v18H3z" fill="#f8e49c"/><path d="M6 33V22c0-4 22-4 22 0v11h-5v-7H11v7z" fill="#7cb8dc"/></svg></button>
        <button class="open" aria-label="SolidWorks part"><svg viewBox="0 0 34 34"><path d="M2 7L17 1l15 5-15 6z" fill="#f0655a"/><path d="M2 7l15 5v21L3 27z" fill="#d8201c"/><path d="M32 6l-15 6v21l14-8z" fill="#b41616"/><text x="4" y="26" class="logo-s">S</text><text x="15" y="26" class="logo-s">W</text></svg></button>
        <button class="open stack" aria-label="Adobe Reader"><svg viewBox="0 0 34 34"><path d="M3 2h28v30H3z" fill="#c8140e" stroke="#7c0806"/><path d="M4 3h26v6H4z" fill="#e24a40"/><path d="M8 26c4-2 9-10 9-18 0 8 4 12 10 13-6-1-13 1-19 5z" fill="none" stroke="#fff" stroke-width="2"/></svg></button>
        <button class="open" aria-label="Calculator"><svg viewBox="0 0 34 34"><path d="M6 2h22v30H6z" fill="#9cc4e4" stroke="#54809c"/><path d="M9 5h16v6H9z" fill="#e8f4fc"/><path d="M9 14h3v3H9zM14 14h3v3h-3zM19 14h3v3h-3zM9 19h3v3H9zM14 19h3v3h-3zM19 19h3v3h-3zM9 24h3v3H9zM14 24h3v3h-3zM19 24h3v3h-3z" fill="#f4faff"/><path d="M23 14h3v13h-3z" fill="#3c80b8"/></svg></button>
        <button class="open" aria-label="Command prompt"><svg viewBox="0 0 34 34"><path d="M2 5h30v24H2z" fill="#050505" stroke="#999"/><path d="M2 5h30v3H2z" fill="#ddd"/><text x="4" y="16" class="cmd">C:\_</text></svg></button>
        <button class="open front" aria-label="Abaqus"><svg viewBox="0 0 34 34"><path d="M12 1h10v32H12z" fill="#7476b0"/><circle cx="17" cy="17" r="12" fill="#8082b8"/><path d="M0 15h34v4H0z" fill="#fff"/><path d="M0 19.500h34" stroke="#9a9ab8"/></svg></button>
        <button class="open" aria-label="Word"><svg viewBox="0 0 34 34"><path d="M3 2h24l5 5v25H3z" fill="#e4eef8" stroke="#8ca4c4"/><path d="M3 3h21v20L3 25z" fill="#b8d0ec"/><path d="M24 24h7M24 27h7M22 30h8" stroke="#5c84bc"/><path d="M5 7l4 15 5-13 4 13 5-15" fill="none" stroke="#1c4c98" stroke-width="4"/></svg></button>
        <div class="tray">
            <span class="lang">EN</span>
            <button aria-label="Show hidden icons"><svg viewBox="0 0 16 16"><path d="M5 10l3-4 3 4z" fill="#eee"/></svg></button>
            <button aria-label="Action center"><svg viewBox="0 0 16 16"><path d="M2.500 1v14" stroke="#fff" stroke-width="1.500"/><path d="M4 3h5v1h6l-2 3 1 2H8V8H4z" fill="#fff"/></svg></button>
            <button aria-label="Network"><svg viewBox="0 0 16 16"><path d="M5.500 4.500h9v8h-9z" fill="#666" stroke="#eee"/><path d="M1 1v3h4V1M3 4v10h5" fill="none" stroke="#fff"/><path d="M10 6l5 10H5z" fill="#f8d024"/><path d="M10 9v4M10 14v1" stroke="#222"/></svg></button>
            <button aria-label="Volume"><svg viewBox="0 0 16 16"><path d="M1 6h3l4-4v12l-4-4H1z" fill="#fff"/><path d="M10 5c2 2 2 4 0 6M12 3c4 3 4 7 0 10" fill="none" stroke="#ddd"/></svg></button>
            <time class="clock">3:55 PM<br>29/1/2014</time>
            <button class="show-desktop" aria-label="Show desktop"></button>
        </div>
    </footer>
</body>
</html>
```
FILE: styles.css
```css
* {
    box-sizing: border-box;
}
body {
    font-family: Roboto, "Open Sans", sans-serif;
    font-size: 12px;
    line-height: 16px;
    color: #111;
    background-color: white;
    margin: 0;
}
button {
    font: inherit;
    color: inherit;
    background: none;
    border: 0;
    margin: 0;
    padding: 0;
    display: flex;
    align-items: center;
    justify-content: center;
    flex: none;
}
svg {
    display: block;
    flex: none;
}

/* title bar */
.titlebar {
    display: flex;
    align-items: center;
    height: 22px;
    padding-right: 3px;
    border-bottom: 2px solid #182c50;
    background: linear-gradient(90deg, #aab5c8 0, #8593a8 120px, #aebccf 180px, #7d8ba0 220px, #a2b4cc 280px, #74839a 400px, #6c7c94 530px, #1d3a66 570px, #27456e 820px, #1b2f4c 1000px, #16243c 1400px, #5aa0cc 1430px, #7ab4d8);
}
.titlebar h1 {
    font-size: 12px;
    font-weight: normal;
    margin: 0 auto 0 6px;
}
.app-icon {
    width: 16px;
    height: 16px;
}
.window-buttons {
    display: flex;
    align-self: flex-start;
    border: 1px solid #3c4a60;
    border-top: 0;
    border-radius: 0 0 5px 5px;
    overflow: hidden;
}
.window-buttons button {
    width: 28px;
    height: 17px;
    border-right: 1px solid #3c4a60;
    background: linear-gradient(#b4c8dc 45%, #6c8cac 50%, #8cb0cc);
}
.window-buttons .close {
    width: 46px;
    border-right: 0;
    background: linear-gradient(#e0a090 45%, #b8402c 50%, #d06c50);
}
.window-buttons svg {
    width: 13px;
    height: 13px;
}

/* menu */
.menubar {
    display: flex;
    align-items: center;
    gap: 16px;
    height: 25px;
    padding: 1px 5px 0;
    background: linear-gradient(90deg, #fdfdfd, #f1f1f1);
    border-bottom: 1px solid #b4b0aa;
}
.menubar a {
    color: inherit;
    text-decoration: none;
}
.doc-icon {
    width: 14px;
    height: 14px;
    margin-right: -6px;
}
.whats-this svg {
    width: 14px;
    height: 14px;
}
.mdi-buttons {
    display: flex;
    gap: 5px;
    margin-left: auto;
}
.mdi-buttons button {
    border: 1px solid #8ca0c0;
    background-color: #eef4fc;
}
.mdi-buttons svg {
    width: 13px;
    height: 11px;
}

/* main toolbar */
.toolbar {
    display: flex;
    height: 28px;
    background-color: #f0f0f0;
}
.tool-group {
    display: flex;
    align-items: center;
    padding-left: 8px;
    border-right: 1px solid #c0c0c8;
    border-bottom: 1px solid #c0c0c8;
    background: radial-gradient(circle, #a8a8b0 1px, transparent 2px) 1px 4px / 5px 5px repeat-y, linear-gradient(#fcfcfc, #ededed);
}
.tool-group.warm {
    background: radial-gradient(circle, #a8a8b0 1px, transparent 2px) 1px 4px / 5px 5px repeat-y, linear-gradient(#fffdf8, #f3efe4);
}
.tool-group button {
    width: 26px;
    height: 26px;
}
.tool-group svg {
    width: 22px;
    height: 22px;
}
.tool-group .divided {
    border-right: 1px solid #c0c0c0;
}
.tool-group .active {
    border: 2px solid #666;
    border-radius: 4px;
    background-color: #ddd;
}
.combo {
    display: flex;
    align-items: center;
    width: 88px;
    height: 24px;
    border: 2px solid #8a8a8a;
    border-right-width: 1px;
    border-bottom-width: 1px;
    background-color: white;
}
.combo select {
    appearance: none;
    flex: 1;
    min-width: 0;
    font: inherit;
    color: inherit;
    border: 0;
    padding: 0 3px;
    background: none;
}
.combo .arrow {
    width: 11px;
    height: 100%;
}
.combo .spin {
    width: 10px;
    height: 20px;
}
.combo-filter {
    width: 106px;
    height: 25px;
    border: 1px solid #a8a8a8;
    background-color: #b2ceec;
}

/* workspace */
.workspace {
    display: flex;
}
.model-panel {
    display: flex;
    flex-direction: column;
    width: 149px;
    padding: 7px 0 5px 2px;
    margin-right: 3px;
}
.tabs {
    display: flex;
    align-items: flex-end;
}
.tab {
    width: 52px;
    height: 21px;
    border: 1px solid #999;
    border-bottom: 0;
    background: linear-gradient(#e8e8e8, #cfcfcf);
}
.tab.selected {
    height: 24px;
    background: white;
    margin-bottom: -1px;
    padding-bottom: 1px;
}
.tree-pane {
    flex: 1;
    display: flex;
    flex-direction: column;
    min-height: 0;
    border: 1px solid #999;
    background-color: white;
}
.tree-tools {
    display: flex;
    align-items: center;
    gap: 6px;
    height: 34px;
    padding-left: 3px;
    border-bottom: 1px solid #999;
}
.tree-tools svg {
    width: 18px;
    height: 18px;
}
.tree-tools .combo {
    width: 45px;
    height: 23px;
    border: 1px solid #888;
}
.tree-tools .combo .arrow {
    width: 11px;
    height: 21px;
}
.tree-tools .combo select {
    padding: 0 0 0 2px;
}
.tree-view {
    flex: 1 1 0;
    display: flex;
    min-height: 0;
    margin-left: 2px;
    border-left: 1px solid #aaa;
}
.tree {
    flex: 1;
    min-width: 0;
    overflow: hidden;
    list-style: none;
    margin: 0;
    padding: 0;
}
.tree li {
    display: flex;
    align-items: center;
    height: 19px;
    white-space: nowrap;
}
.tree svg {
    width: 8px;
    height: 14px;
}
.tree .feature {
    gap: 5px;
}
.tree .branch {
    gap: 2px;
}
.tree .datum::before {
    content: "";
    width: 5px;
    margin-right: 3px;
    border-top: 1px dotted #888;
}
.tree .leaf {
    padding-left: 17px;
}
.tree .current {
    text-decoration: underline;
}
.tree mark {
    height: 19px;
    line-height: 19px;
    padding: 0 1px;
    color: white;
    background-color: #3c94dc;
}
.vscroll {
    display: flex;
    flex-direction: column;
    width: 14px;
    background-color: #f0f0f0;
}
.vscroll svg {
    width: 14px;
}
.vthumb {
    flex: 0 1 378px;
    display: flex;
    align-items: center;
    border: 1px solid #a0a0a0;
    border-radius: 2px;
    background: linear-gradient(90deg, #f6f6f6, #c8c8cc);
}
.vthumb svg {
    width: 12px;
}
.vscroll .down {
    margin-top: auto;
}
.hscroll {
    display: flex;
    align-items: center;
    justify-content: space-between;
    height: 17px;
    margin: 0 14px 1px 2px;
    background-color: #f0f0f0;
}
.hscroll svg {
    width: 16px;
    height: 14px;
}
.hthumb {
    display: flex;
    justify-content: center;
    width: 42px;
    height: 15px;
    margin-left: 14px;
    border: 1px solid #999;
    border-radius: 2px;
    background: linear-gradient(#f6f6f6, #c8c8cc);
}

/* right of the model tree */
.stage {
    flex: 1;
    min-width: 0;
}
.context-bar {
    display: flex;
    align-items: center;
    gap: 6px;
    height: 32px;
    padding: 0 10px;
    background: linear-gradient(#fff, #efefef);
}
.context-bar .combo {
    margin-right: 8px;
}
.context-bar .combo-module {
    width: 106px;
}
.drawing-area {
    display: flex;
    align-items: stretch;
    background-color: #f3f3f3;
}
.toolbox {
    width: 64px;
    padding: 5px 3px 0 5px;
    background: linear-gradient(90deg, #fff, #f0f0f0 90%);
    border-top: 1px solid #bbb;
}
.tool-block {
    display: grid;
    grid-template-columns: 28px 28px;
    grid-auto-rows: 28px;
}
.toolbox svg {
    width: 24px;
    height: 24px;
}
.toolbox hr {
    border: 0;
    border-top: 1px solid #aaa;
    margin: 3px 0;
}
.toolbox .fx {
    font: italic 16px "Liberation Serif", serif;
}
.num {
    font: 9px "Liberation Sans", sans-serif;
    fill: #a02c3c;
}
.viewport {
    flex: 1;
    min-width: 0;
    height: auto;
}
.grid-glow {
    fill: none;
    stroke: #152e50;
    stroke-width: 9px;
}
.grid-line {
    fill: #216cc0;
}
.ref-line {
    stroke: #ece06a;
    stroke-dasharray: 4 3;
}
.origin-line {
    stroke: #5a9a8c;
    stroke-dasharray: 6 4 2 4;
    opacity: .6;
}
.ref-box {
    fill: none;
    stroke: #f2ee6c;
    stroke-width: 2px;
    stroke-dasharray: 4 4 2 4;
    opacity: .85;
}
.axis {
    stroke: #44dc34;
    stroke-width: 2px;
    stroke-dasharray: 6 2 2 2;
}
.dims path {
    stroke: #f4f4f4;
}
.dims .head {
    fill: #fff;
}
.dims text, .marks text {
    font: 11px "Liberation Sans", sans-serif;
    fill: #fff;
}
.marks text {
    font-size: 10px;
}
.marks path {
    fill: none;
    stroke: #fff;
}
.triad text {
    font: bold 10px "Liberation Sans", sans-serif;
    fill: #fff;
}
.compass text {
    font: 8px "Liberation Sans", sans-serif;
    fill: #f0ee7c;
}
.watermark {
    font: 300 64px "Liberation Serif", "Noto Sans CJK SC", serif;
    fill: #bcc4cc;
    filter: drop-shadow(2px 2px 0 #2c3238);
}

/* prompt */
.prompt-area {
    display: flex;
    align-items: center;
    gap: 4px;
    height: 38px;
    padding: 0 3px 2px 9px;
    background: linear-gradient(#fff, #f0f0f0);
}
.prompt-area .square {
    width: 18px;
    height: 21px;
    border: 1px solid #999;
    border-radius: 3px;
    background-color: #f2f2f2;
}
.prompt-area .square svg {
    width: 16px;
    height: 18px;
}
.prompt-area .square + span {
    margin: 0 3px 0 4px;
}
.done {
    width: 34px;
    height: 21px;
    border: 2px solid #3c8cb4;
    border-radius: 3px;
    background-color: #d8ecf6;
}
.brand {
    display: flex;
    align-items: center;
    gap: 5px;
    margin-left: auto;
    font: italic 18px "DejaVu Sans", sans-serif;
    color: #3c4650;
}
.brand svg {
    width: 22px;
    height: 24px;
}

/* messages */
.message-area {
    display: flex;
    height: 62px;
    padding-bottom: 2px;
    background-color: #f0f0f0;
}
.message-tabs {
    width: 38px;
    margin-left: 2px;
    overflow: hidden;
}
.message-tabs button {
    width: 38px;
    height: 22px;
    border: 1px solid #999;
    background-color: #dcdcdc;
}
.message-tabs .selected {
    height: 38px;
    background-color: white;
}
.message-tabs svg {
    width: 26px;
    height: 18px;
}
.message-tabs .selected svg {
    width: 22px;
    height: 26px;
}
.log {
    flex: 1;
    display: flex;
    justify-content: space-between;
    margin-left: 1px;
    border: 1px solid #999;
    border-top-width: 2px;
    background-color: white;
}
.log pre {
    font: 13px/13px "Liberation Mono", monospace;
    color: #000;
    margin: 0;
    padding: 3px;
}
.log-scroll {
    width: 16px;
    height: 100%;
}
.grip {
    width: 14px;
    height: 14px;
    align-self: flex-end;
    margin: 0 1px 0 4px;
}

/* taskbar */
.taskbar {
    display: flex;
    align-items: center;
    gap: 4px;
    height: 40px;
    background: linear-gradient(transparent 50%, #0008), linear-gradient(90deg, #0c1014, #15181c 400px, #3c4044 750px, #5c6064 830px, #2c3034 900px, #4c5054 960px, #1c2024 1060px, #0a0e14 1300px, #10151c);
    border-top: 1px solid #444;
}
.taskbar > button {
    width: 58px;
    height: 39px;
}
.taskbar > button svg {
    width: 34px;
    height: 34px;
}
.taskbar .start {
    width: 55px;
}
.taskbar .start svg {
    width: 38px;
    height: 38px;
}
.taskbar .open {
    border: 1px solid #888c90;
    border-radius: 3px;
    background: linear-gradient(135deg, #74787c, #2c3034 60%, #44484c);
}
.taskbar .stack {
    border-right: 4px double #888c90;
}
.taskbar .front {
    background: linear-gradient(135deg, #d4d6d8, #85898c 60%, #a4a8ac);
}
.logo-s {
    font: bold 16px "Liberation Sans", sans-serif;
    fill: #fff;
}
.pid {
    font: bold 8px "Liberation Sans", sans-serif;
    fill: #fff;
}
.cmd {
    font: 9px "Liberation Mono", monospace;
    fill: #fff;
}
.tray {
    display: flex;
    align-items: center;
    gap: 9px;
    height: 100%;
    margin-left: auto;
    color: white;
}
.tray svg {
    width: 16px;
    height: 16px;
}
.lang {
    margin-right: 2px;
}
.clock {
    margin: 0 2px 0 6px;
    text-align: center;
}
.show-desktop {
    width: 13px;
    height: 100%;
    border: 1px solid #666;
    background: linear-gradient(#666, #222 50%);
}
```
